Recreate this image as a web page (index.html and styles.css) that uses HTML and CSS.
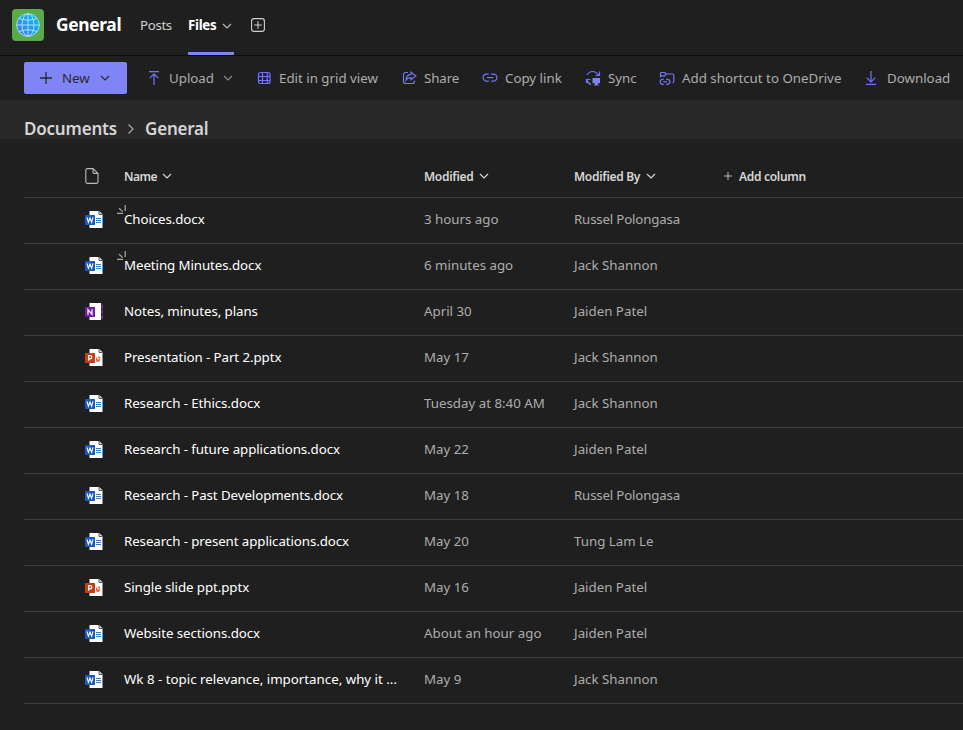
FILE: index.html
```html
<!DOCTYPE html>
<html lang="en">
<head>
<meta charset="utf-8">
<title>General - Files</title>
<link rel="stylesheet" href="styles.css">
</head>
<body>
<svg class="defs" aria-hidden="true">
  <symbol id="chev" viewBox="0 0 10 10"><path d="M1 3l4 4 4-4" fill="none" stroke="currentColor" stroke-width="1.2"/></symbol>
  <symbol id="plus" viewBox="0 0 12 12"><path d="M6 0v12M0 6h12" stroke="currentColor" stroke-width="1.3"/></symbol>
  <symbol id="word" viewBox="0 0 18 18">
    <path d="M4.5 0h9.5l3.5 3.5V17h-13z" fill="#fff"/><path d="M14 0v3.5h3.5" fill="#ddd" stroke="#444" stroke-width=".9"/>
    <path d="M11 7.5h5M11 9.5h5M11 11.5h5" stroke="#2b7cd3"/><rect y="4" width="10" height="10" rx=".5" fill="#185abd"/>
    <path d="M2 6.3l1.4 5L5 7l1.6 4.3 1.4-5" fill="none" stroke="#fff" stroke-width="1.1"/>
  </symbol>
  <symbol id="ppt" viewBox="0 0 18 18">
    <path d="M4.5 0h9.5l3.5 3.5V17h-13z" fill="#fff"/><path d="M14 0v3.5h3.5" fill="#ddd" stroke="#444" stroke-width=".9"/>
    <path d="M11 8.5h1.5v1.8h3a2.7 2.7 0 0 1-4.5 2z" fill="#ed6c47"/><path d="M13.3 7a2.5 2.5 0 0 1 2.2 2.4h-2.2z" fill="#ed6c47"/>
    <rect y="4" width="10" height="10" rx=".5" fill="#c43e1c"/><path d="M3.7 11.8V6.6h1.5a1.6 1.6 0 0 1 0 3.2H3.7" fill="none" stroke="#fff" stroke-width="1.2"/>
  </symbol>
  <symbol id="note" viewBox="0 0 18 18">
    <path d="M4.5 0H16v17H4.5z" fill="#fff"/><path d="M17.2 1.5v4M17.2 6.7v4M17.2 11.9v4" stroke="#9332bf" stroke-width="1.2"/>
    <rect y="4" width="10" height="10" rx=".5" fill="#7719aa"/><path d="M3 11.7V6.6l4 4.8V6.3" fill="none" stroke="#fff" stroke-width="1.2"/>
  </symbol>
  <symbol id="spark" viewBox="0 0 9 9"><path d="M0 8.4h6M2 3.2l3.8 3.4M8.2 0v6" stroke="#aaa" stroke-width="1.2"/></symbol>
</svg>

<header class="channel">
  <div class="avatar">
    <svg width="24" height="24" viewBox="0 0 24 24"><defs><linearGradient id="g" x1="1" y1="0" x2="0" y2="1"><stop offset="0" stop-color="#00c2ed"/><stop offset="1" stop-color="#4776ee"/></linearGradient></defs>
    <circle cx="12" cy="12" r="11.3" fill="url(#g)" stroke="#c5e9ff" stroke-width=".8"/><g fill="none" stroke="#b9e5ff" stroke-width=".9"><ellipse cx="12" cy="12" rx="6" ry="11.3"/><path d="M12 .7v22.6M.7 12h22.6M3 5.5q9 3.4 18 0M3 18.5q9-3.4 18 0"/></g></svg>
  </div>
  <h1>General</h1>
  <nav>
    <a class="posts">Posts</a>
    <a class="files"><span>Files</span><svg width="10" height="10"><use href="#chev"/></svg></a>
    <svg class="addtab" width="14" height="14" viewBox="0 0 14 14" fill="none" stroke="#d0d0d0" stroke-width="1.1"><rect x=".6" y=".6" width="12.8" height="12.8" rx="2.5"/><path d="M7 3.2v7.6M3.2 7h7.6"/></svg>
  </nav>
</header>

<div class="toolbar">
  <button class="new"><svg width="12" height="12"><use href="#plus"/></svg><span>New</span><svg class="down" width="10" height="10"><use href="#chev"/></svg></button>
  <div class="cmd upload"><svg width="12" height="14" viewBox="0 0 12 14"><path d="M1 .7h10M6 14V3M1.7 7.2L6 2.9l4.3 4.3"/></svg><span>Upload</span><svg class="gray" width="10" height="10"><use href="#chev"/></svg></div>
  <div class="cmd edit"><svg width="14" height="14" viewBox="0 0 14 14"><rect x="1.5" y="1.5" width="11.5" height="11" rx="2"/><path d="M5.5 1.5v11M1.5 5.5H13M1.5 9.5H13M10.2 1.5v11"/></svg><span>Edit in grid view</span></div>
  <div class="cmd share"><svg width="15" height="14" viewBox="0 0 15 14"><path d="M6 1.5H3.5a2 2 0 0 0-2 2v7a2 2 0 0 0 2 2h7a2 2 0 0 0 2-2V9.5M9 1.2L13.8 5 9 8.8V6.7C6.8 6.5 5.2 7.3 4 9.2 4.2 5.5 6 3.5 9 3.3z"/></svg><span>Share</span></div>
  <div class="cmd copy"><svg width="16" height="14" viewBox="0 0 16 14"><path d="M6.8 3.2H4.6a3.5 3.5 0 0 0 0 7h2.2M9.2 3.2h2.2a3.5 3.5 0 0 1 0 7H9.2M4.7 6.7h6.6"/></svg><span>Copy link</span></div>
  <div class="cmd sync"><svg width="16" height="16" viewBox="0 0 16 16"><path d="M2 5Q4 1.5 7.5 1.5T13.5 5M14.5 1.5V5.5h-4M1.5 13V9.5h4M2 10Q3 13.5 6 14.5"/><path class="solid" d="M7.5 8H15v5.2h-2.3v1.3h1v1H9v-1h1v-1.3H7.5z"/></svg><span>Sync</span></div>
  <div class="cmd shortcut"><svg width="16" height="15" viewBox="0 0 16 15"><path d="M1.5 6.5v-4a1 1 0 0 1 1-1h3.2L7.5 3h6a1.3 1.3 0 0 1 1.3 1.3v6a1.3 1.3 0 0 1-1.3 1.3M1.5 4.8h4L7.5 3M4.8 8.3H3.6a2.5 2.5 0 0 0 0 5h1.2M7.2 8.3h1.2a2.5 2.5 0 0 1 0 5H7.2M4.2 10.8H8"/></svg><span>Add shortcut to OneDrive</span></div>
  <div class="cmd download"><svg width="12" height="14" viewBox="0 0 12 14"><path d="M1 13.3h10M6 0v11M1.7 6.7L6 11l4.3-4.3"/></svg><span>Download</span></div>
</div>

<div class="crumbs"><span class="docs">Documents</span><svg width="8" height="12" viewBox="0 0 8 12"><path d="M1.5 1.5L6 6l-4.5 4.5" fill="none" stroke="#aaa" stroke-width="1.2"/></svg><span class="here">General</span></div>

<main class="list">
  <div class="row head">
    <svg class="ficon" width="14" height="16" viewBox="0 0 14 16" fill="none" stroke="#bbb" stroke-width="1.1"><path d="M2.5.6H8l5 4.8v8.4a1.6 1.6 0 0 1-1.6 1.6h-9A1.6 1.6 0 0 1 .8 13.8V2.2A1.6 1.6 0 0 1 2.5.6zM8 .6v3.6q0 1.2 1.2 1.2H13"/></svg>
    <div><span class="h1">Name</span><svg width="10" height="10"><use href="#chev"/></svg></div>
    <div><span class="h2">Modified</span><svg width="10" height="10"><use href="#chev"/></svg></div>
    <div><span class="h3">Modified By</span><svg width="10" height="10"><use href="#chev"/></svg></div>
    <div class="addcol"><svg width="8" height="8"><use href="#plus"/></svg><span>Add column</span></div>
  </div>
  <div class="row"><svg class="ficon"><use href="#word"/></svg><div class="name"><svg class="spark"><use href="#spark"/></svg>Choices.docx</div><div>3 hours ago</div><div class="rp">Russel Polongasa</div></div>
  <div class="row"><svg class="ficon"><use href="#word"/></svg><div class="name"><svg class="spark"><use href="#spark"/></svg>Meeting Minutes.docx</div><div>6 minutes ago</div><div>Jack Shannon</div></div>
  <div class="row"><svg class="ficon"><use href="#note"/></svg><div class="name">Notes, minutes, plans</div><div>April 30</div><div>Jaiden Patel</div></div>
  <div class="row"><svg class="ficon"><use href="#ppt"/></svg><div class="name">Presentation - Part 2.pptx</div><div>May 17</div><div>Jack Shannon</div></div>
  <div class="row"><svg class="ficon"><use href="#word"/></svg><div class="name">Research - Ethics.docx</div><div>Tuesday at 8:40 AM</div><div>Jack Shannon</div></div>
  <div class="row"><svg class="ficon"><use href="#word"/></svg><div class="name">Research - future applications.docx</div><div>May 22</div><div>Jaiden Patel</div></div>
  <div class="row"><svg class="ficon"><use href="#word"/></svg><div class="name">Research - Past Developments.docx</div><div>May 18</div><div class="rp">Russel Polongasa</div></div>
  <div class="row"><svg class="ficon"><use href="#word"/></svg><div class="name">Research - present applications.docx</div><div>May 20</div><div>Tung Lam Le</div></div>
  <div class="row"><svg class="ficon"><use href="#ppt"/></svg><div class="name">Single slide ppt.pptx</div><div>May 16</div><div>Jaiden Patel</div></div>
  <div class="row"><svg class="ficon"><use href="#word"/></svg><div class="name">Website sections.docx</div><div>About an hour ago</div><div>Jaiden Patel</div></div>
  <div class="row"><svg class="ficon"><use href="#word"/></svg><div class="name long">Wk 8 - topic relevance, importance, why it ...</div><div>May 9</div><div>Jack Shannon</div></div>
</main>
</body>
</html>
```
FILE: styles.css
```css
* { box-sizing: border-box; }
body { margin: 0; height: 730px; overflow: hidden; background: #1f1f1f; color: #adadad; font: 13.3px/20px "Noto Sans", "Open Sans", sans-serif; white-space: nowrap; }
svg { display: block; flex: none; }
.defs { position: absolute; width: 0; height: 0; }
.channel { height: 56px; border-bottom: 1px solid #0b0b0b; display: flex; padding-left: 12px; }
.avatar { width: 32px; height: 32px; margin-top: 9px; border-radius: 4px; background: #58aa4b; display: grid; place-items: center; }
.channel h1 { margin: 0 0 0 12px; width: 84px; font-size: 17.4px; font-weight: 700; line-height: 49px; letter-spacing: -.35px; color: #fff; }
.channel nav { display: flex; height: 55px; line-height: 50px; }
.posts { width: 48px; color: #d0d0d0; letter-spacing: -.35px; }
.files { display: flex; width: 46px; color: #fff; font-weight: 700; letter-spacing: -.3px; border-bottom: 3px solid #7f85f5; border-radius: 1px; }
.files span { width: 34px; }
.files svg { margin-top: 21px; color: #bbb; }
.addtab { margin: 18px 0 0 17px; }
.toolbar { height: 44px; display: flex; align-items: center; padding-left: 24px; }
.new { display: flex; align-items: center; width: 103px; height: 32px; margin-right: 21px; padding: 0 0 0 16px; border: 0; border-radius: 2px; background: #7f85f5; color: #292929; font: inherit; }
.new span { width: 38px; margin-left: 10px; text-align: left; }
.cmd { display: flex; align-items: center; flex: none; }
.cmd > svg { fill: none; stroke: #7177f3; stroke-width: 1.2; }
.cmd .solid { fill: #7f85f5; stroke: none; }
.cmd > .gray { stroke: none; color: #8a8a8a; }
.upload { width: 109px; }
.upload span { width: 54px; margin-left: 9px; }
.edit { width: 145px; }
.edit span { margin-left: 8px; }
.share { width: 80px; }
.share span { margin-left: 7px; letter-spacing: -.1px; }
.copy { width: 103px; }
.copy span, .sync span { margin-left: 7px; }
.sync { width: 74px; }
.shortcut { width: 206px; }
.shortcut span { margin-left: 7px; }
.download span { margin-left: 10px; }
.crumbs { height: 39px; background: #292929; display: flex; align-items: center; padding: 18px 0 0 24px; color: #d6d6d6; font-size: 17px; font-weight: 600; letter-spacing: -.2px; }
.docs { width: 103px; }
.here { margin-left: 10px; }
.list { padding-left: 24px; }
.row { height: 46px; display: grid; grid-template-columns: 100px 300px 150px 150px 1fr; align-items: center; border-bottom: 1px solid #3d3d3d; }
.row > div { padding-bottom: 4px; }
.ficon { width: 18px; height: 18px; margin: 0 0 2px 61px; }
.rp { letter-spacing: -.18px; }
.name { color: #fff; position: relative; letter-spacing: -.08px; }
.long { letter-spacing: 0; }
.spark { position: absolute; left: -7px; top: -4px; width: 9px; height: 9px; }
.row.head { height: 59px; padding-top: 16px; color: #d6d6d6; font-size: 12px; font-weight: 600; letter-spacing: -.3px; }
.row.head > div { display: flex; align-items: center; padding: 2px 0 0; }
.head > div > svg { margin-top: -2px; }
.head .ficon { width: 14px; height: 16px; margin-bottom: 0; }
.h1 { width: 38px; letter-spacing: -.5px; }
.h2 { width: 55px; }
.h3 { width: 72px; }
.addcol span { margin-left: 7px; }
```
